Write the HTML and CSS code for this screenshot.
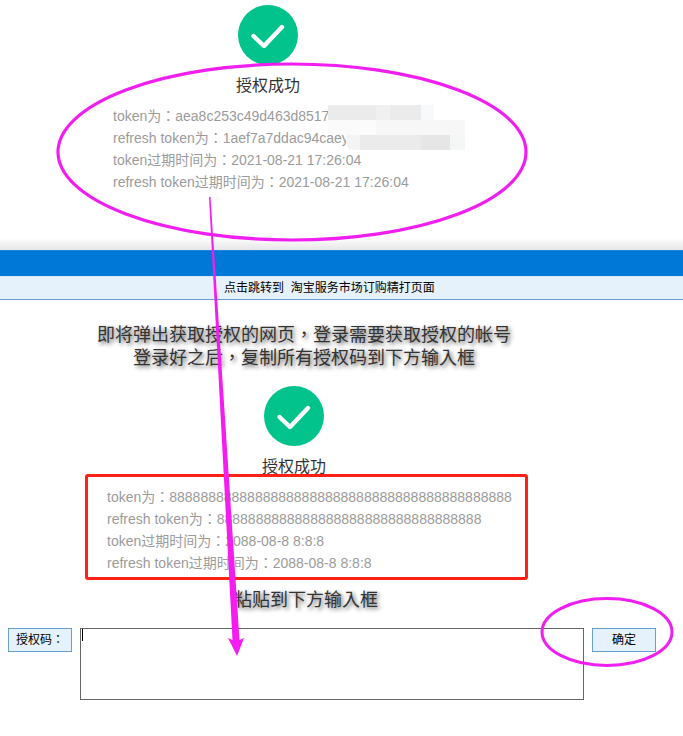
FILE: index.html
```html
<!DOCTYPE html>
<html lang="zh-TW">
<head>
<meta charset="utf-8">
<title>授权成功</title>
<link rel="stylesheet" href="styles.css">
</head>
<body>
<div class="page">
  <section class="shot-top">
    <div class="result result-top">
      <svg class="check" viewBox="0 0 60 60"><circle cx="30" cy="30" r="30" fill="#02c38b"/><path d="M15.5 31 L26 41 L44 22" fill="none" stroke="#fff" stroke-width="4.4" stroke-linecap="round" stroke-linejoin="round"/></svg>
      <h2 class="title">授权成功</h2>
    </div>
    <div class="info info-top">
      <p>token为：aea8c253c49d463d8517</p>
      <p>refresh token为：1aef7a7ddac94caey</p>
      <p>token过期时间为：2021-08-21 17:26:04</p>
      <p>refresh token过期时间为：2021-08-21 17:26:04</p>
    </div>
  </section>

  <div class="blue-bar"></div>
  <div class="link-bar">点击跳转到&nbsp; 淘宝服务市场订购精打页面</div>

  <section class="hint">
    <p>即将弹出获取授权的网页，登录需要获取授权的帐号</p>
    <p>登录好之后，复制所有授权码到下方输入框</p>
  </section>

  <div class="result result-low">
    <svg class="check" viewBox="0 0 60 60"><circle cx="30" cy="30" r="30" fill="#02c38b"/><path d="M15.5 31 L26 41 L44 22" fill="none" stroke="#fff" stroke-width="4.4" stroke-linecap="round" stroke-linejoin="round"/></svg>
    <h2 class="title">授权成功</h2>
  </div>
  <div class="info info-low">
    <p>token为：88888888888888888888888888888888888888888888</p>
    <p>refresh token为：8888888888888888888888888888888888</p>
    <p>token过期时间为：2088-08-8 8:8:8</p>
    <p>refresh token过期时间为：2088-08-8 8:8:8</p>
  </div>

  <p class="paste">粘贴到下方输入框</p>

  <div class="code-row">
    <span class="label">授权码：</span>
    <div class="input"><span class="caret"></span></div>
    <span class="button">确定</span>
  </div>
</div>

<svg class="marks" width="683" height="736" viewBox="0 0 683 736">
  <path d="M328 105 H376 V120 H328 Z" fill="#ebebeb"/>
  <rect x="376" y="105" width="14" height="15" fill="#f0f0f0"/>
  <rect x="390" y="105" width="31" height="15" fill="#ebebeb"/>
  <rect x="421" y="105" width="13" height="15" fill="#f7f9fb"/>
  <rect x="328" y="120" width="48" height="15" fill="#fbfbfb"/>
  <rect x="376" y="120" width="89" height="15" fill="#f7f7f7"/>
  <path d="M346 135 H360 V150 H354 Q346 150 346 142 Z" fill="#f4f4f4"/>
  <rect x="360" y="135" width="61" height="15" fill="#ebebeb"/>
  <rect x="421" y="135" width="29" height="15" fill="#e6e6e6"/>
  <rect x="450" y="135" width="15" height="15" fill="#f5f6f6"/>
  <ellipse cx="292" cy="152" rx="234" ry="88" fill="none" stroke="#f01ff0" stroke-width="3.2"/>
  <polygon points="209,197 210.5,197 239.5,640 244,638 237,656 228,638 232.5,640" fill="#f41cf0"/>
  <ellipse cx="607" cy="632" rx="65" ry="33.5" fill="none" stroke="#f01ff0" stroke-width="3"/>
</svg>
</body>
</html>
```
FILE: styles.css
```css
* { box-sizing: border-box; }
html, body { margin: 0; padding: 0; background: #fff; }
body {
  width: 683px;
  height: 736px;
  overflow: hidden;
  position: relative;
  font-family: "Liberation Sans", "Noto Sans CJK TC", sans-serif;
}
p, h2 { margin: 0; font-weight: normal; }

.shot-top {
  height: 250px;
  padding-top: 5px;
  background: linear-gradient(to bottom, #fff 0, #fff 238px, #e6e6e6 250px);
}
.result { display: flex; flex-direction: column; align-items: center; }
.result-top { width: 536px; }
.result-low { width: 588px; margin-top: 16px; }
.check { width: 60px; height: 60px; display: block; }
.title {
  font-size: 16px;
  line-height: 22px;
  margin-top: 10px;
  color: #333;
}
.info p { font-size: 14px; line-height: 22px; color: #9b9b9b; white-space: nowrap; }
.info-top { padding: 8px 0 0 113px; }
.info-low {
  width: 443px;
  height: 106px;
  margin: -4px 0 0 85px;
  padding: 9px 0 0 19px;
  border: 3px solid #ff2016;
  border-radius: 3px;
}

.blue-bar {
  height: 26px;
  background: #0078d7;
  border-top: 1px solid #1a86dd;
}
.link-bar {
  height: 24px;
  line-height: 23px;
  padding-left: 224px;
  font-size: 12px;
  color: #000;
  background: #e5f1fb;
  border-top: 1px solid #d5e6f6;
  border-bottom: 1px solid #6a9bd1;
}

.hint {
  padding-top: 24px;
  text-align: center;
  width: 608px;
  font-size: 18px;
  line-height: 23px;
  color: #333;
  text-shadow: 2px 2px 4px rgba(0, 0, 0, .65);
}
.paste {
  padding-left: 234px;
  margin-top: 9px;
  font-size: 18px;
  line-height: 22px;
  color: #333;
  text-shadow: 2px 2px 4px rgba(0, 0, 0, .65);
}

.code-row {
  display: flex;
  align-items: flex-start;
  gap: 8px;
  margin-top: 17px;
  padding-left: 8px;
}
.label, .button {
  width: 64px;
  height: 24px;
  line-height: 22px;
  font-size: 12px;
  color: #000;
  text-align: center;
  background: #e5f1fb;
  border: 1px solid #6a9fd0;
}
.input {
  width: 504px;
  height: 72px;
  border: 1px solid #666;
  background: #fff;
}
.caret { display: block; width: 1px; height: 12px; margin-left: 1px; background: #000; }

.marks { position: absolute; left: 0; top: 0; pointer-events: none; }
```
